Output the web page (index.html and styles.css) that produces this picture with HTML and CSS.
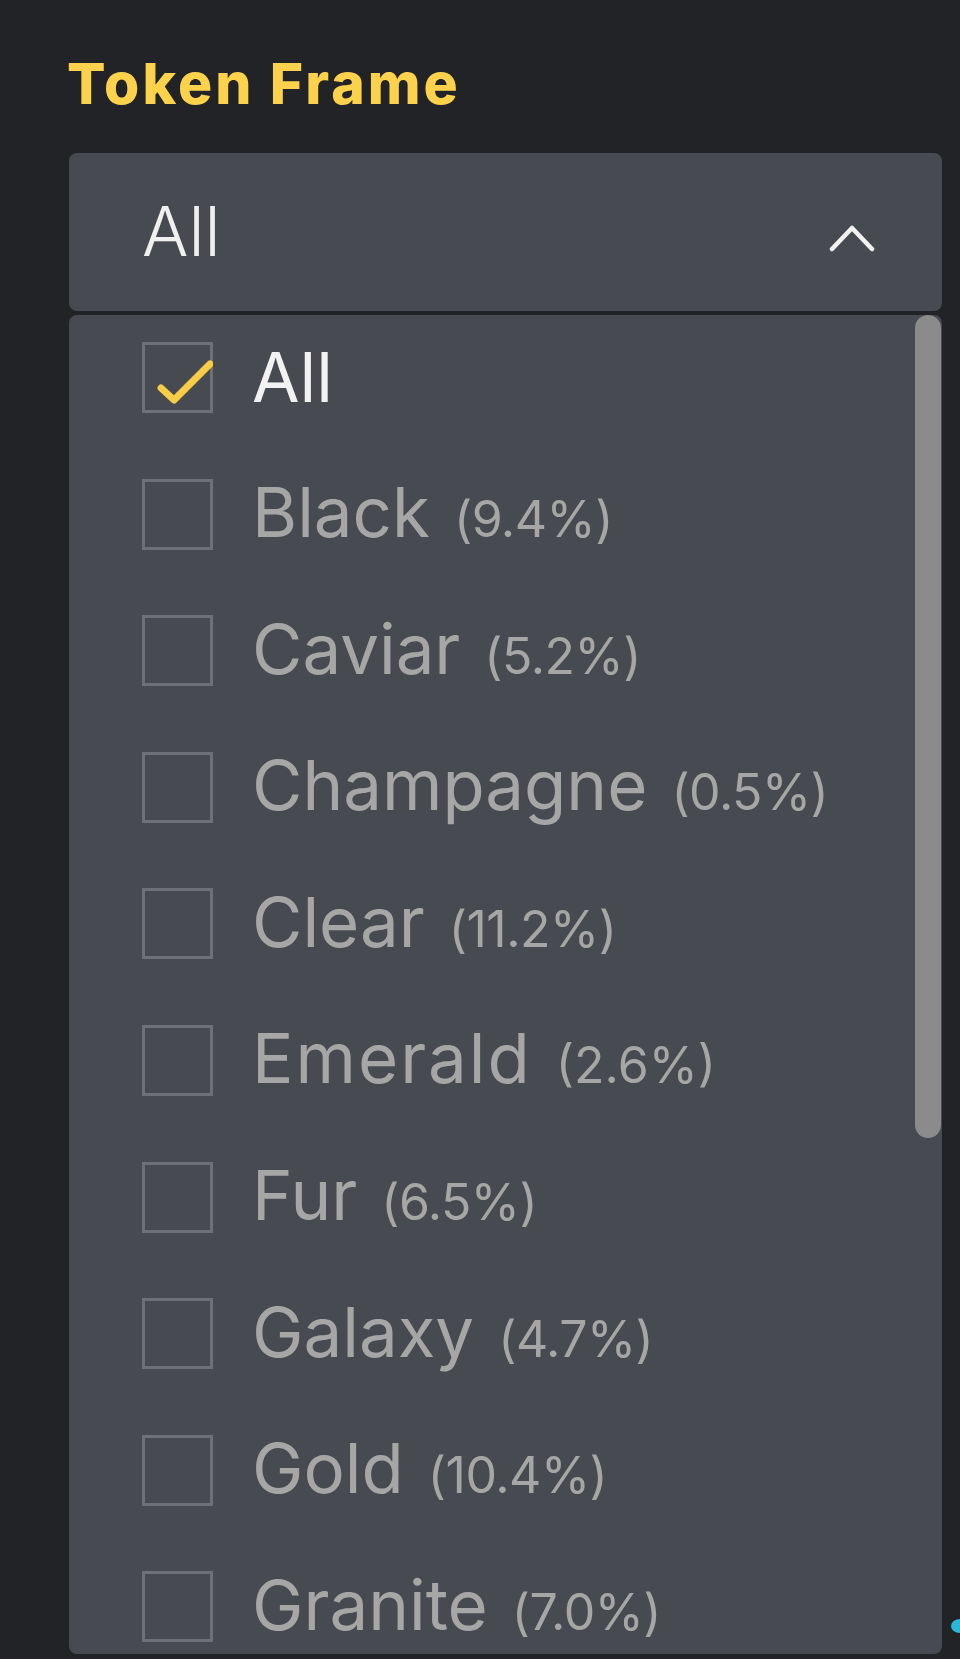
FILE: index.html
```html
<!DOCTYPE html>
<html lang="en">
<head>
<meta charset="utf-8">
<title>Token Frame</title>
<link rel="stylesheet" href="styles.css">
</head>
<body>
<div class="page">
  <h2 class="title">Token Frame</h2>
  <div class="select">
    <span class="select-value">All</span>
    <svg class="chevron" width="46" height="30" viewBox="0 0 46 30"><path d="M3 27 L23 6 L43 27" fill="none" stroke="#f2f2f2" stroke-width="4.5" stroke-linecap="round" stroke-linejoin="round"/></svg>
  </div>
  <div class="list">
    <div class="row">
      <span class="box"><svg width="65" height="65" viewBox="0 0 65 65"><path d="M13 43 L26 55 L62 19" fill="none" stroke="#f7cd45" stroke-width="7" stroke-linecap="round" stroke-linejoin="round"/></svg></span>
      <span class="label label-on">All</span>
    </div>
    <div class="row"><span class="box"></span><span class="label">Black<span class="pct">(9.4%)</span></span></div>
    <div class="row"><span class="box"></span><span class="label">Caviar<span class="pct">(5.2%)</span></span></div>
    <div class="row"><span class="box"></span><span class="label">Champagne<span class="pct">(0.5%)</span></span></div>
    <div class="row"><span class="box"></span><span class="label">Clear<span class="pct">(11.2%)</span></span></div>
    <div class="row"><span class="box"></span><span class="label wide">Emerald<span class="pct">(2.6%)</span></span></div>
    <div class="row"><span class="box"></span><span class="label">Fur<span class="pct">(6.5%)</span></span></div>
    <div class="row"><span class="box"></span><span class="label">Galaxy<span class="pct">(4.7%)</span></span></div>
    <div class="row"><span class="box"></span><span class="label">Gold<span class="pct">(10.4%)</span></span></div>
    <div class="row"><span class="box"></span><span class="label">Granite<span class="pct">(7.0%)</span></span></div>
    <div class="scrollbar"></div>
  </div>
</div>
<div class="fab-edge"></div>
</body>
</html>
```
FILE: styles.css
```css
html, body {
  margin: 0;
  padding: 0;
  background: #222327;
  height: 1659px;
  overflow: hidden;
}
body {
  font-family: Inter, "Open Sans", "Liberation Sans", sans-serif;
  position: relative;
}
.page {
  padding: 55px 0 0 69px;
  width: 873px;
}
.title {
  margin: 0 0 0 -2px;
  font-size: 57px;
  line-height: 57px;
  font-weight: 800;
  color: #fcd24c;
  letter-spacing: 3px;
}
.select {
  margin-top: 41px;
  height: 158px;
  background: #484a51;
  border-radius: 8px;
  display: flex;
  align-items: center;
  justify-content: space-between;
  padding: 0 67px 0 73px;
  box-sizing: border-box;
}
.select-value {
  font-size: 69px;
  font-weight: 300;
  color: #f0f0f0;
  line-height: 1;
  margin-top: -2px;
}
.chevron {
  display: block;
  margin-top: 10px;
}
.list {
  position: relative;
  margin-top: 4px;
  height: 1339px;
  background: #484a51;
  border-radius: 8px;
  overflow: hidden;
  box-sizing: border-box;
  padding: 27px 0 0 73px;
  display: flex;
  flex-direction: column;
  gap: 65.6px;
}
.row {
  height: 71px;
  display: flex;
  align-items: center;
  flex-shrink: 0;
}
.box {
  width: 71px;
  height: 71px;
  box-sizing: border-box;
  border: 3px solid #6e7075;
  flex-shrink: 0;
  display: flex;
  align-items: flex-end;
  justify-content: flex-end;
}
.box svg {
  display: block;
  margin: 0 -3px 0 0;
}
.label {
  margin-left: 39px;
  font-size: 69px;
  line-height: 71px;
  color: #a6a6a6;
  white-space: nowrap;
  margin-top: 4px;
}
.label.wide {
  letter-spacing: 2px;
}
.label.wide .pct {
  letter-spacing: 0;
}
.label-on {
  color: #f2f2f2;
  margin-top: 0;
}
.pct {
  font-size: 50px;
  margin-left: 24px;
  letter-spacing: -0.5px;
}
.scrollbar {
  position: absolute;
  top: 0;
  right: 1px;
  width: 26px;
  height: 823px;
  border-radius: 13px;
  background: #8b8b8b;
}
.fab-edge {
  position: absolute;
  left: 951px;
  top: 1619px;
  width: 18px;
  height: 14px;
  border-radius: 50%;
  background: #2bb8d8;
}
```
